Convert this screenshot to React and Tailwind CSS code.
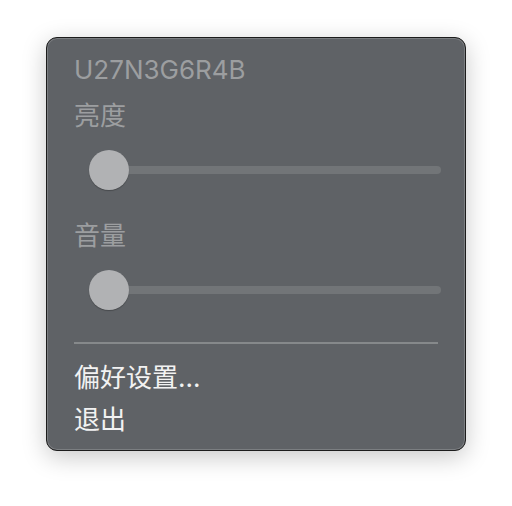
import React from "react";

function Slider() {
  return (
    <div className="relative ml-[15px] flex h-[40px] w-[352px] items-center">
      <div className="h-[8px] w-full rounded-full bg-[#727578]" />
      <div className="absolute left-0 top-0 h-[40px] w-[40px] rounded-full bg-[#b1b2b4] shadow-[0_1px_1px_rgba(0,0,0,0.25)]" />
    </div>
  );
}

export default function App() {
  return (
    <div
      className="h-[506px] w-[512px] bg-white pl-[46px] pt-[37px]"
      style={{ fontFamily: 'Inter, "Noto Sans CJK SC", sans-serif' }}
    >
      <div className="flex h-[414px] w-[420px] flex-col rounded-[11px] border border-[#1c1c1c] bg-[#5f6266] pl-[27px] pr-[27px] shadow-[inset_0_0_0_1px_rgba(255,255,255,0.18),0_6px_24px_rgba(0,0,0,0.22)]">
        <div className="pt-[16px] text-[26px] leading-[32px] text-[#9c9ea0]">U27N3G6R4B</div>
        <div className="mt-[14px] text-[26px] leading-[32px] text-[#9c9ea0]">亮度</div>
        <div className="mt-[18px]">
          <Slider />
        </div>
        <div className="mt-[30px] text-[26px] leading-[32px] text-[#9c9ea0]">音量</div>
        <div className="mt-[18px]">
          <Slider />
        </div>
        <div className="mt-[32px] h-[2px] w-[364px] bg-[#86898b]" />
        <div className="mt-[18px] text-[26px] leading-[32px] text-[#f2f2f2]">偏好设置...</div>
        <div className="mt-[10px] text-[26px] leading-[32px] text-[#f2f2f2]">退出</div>
      </div>
    </div>
  );
}
